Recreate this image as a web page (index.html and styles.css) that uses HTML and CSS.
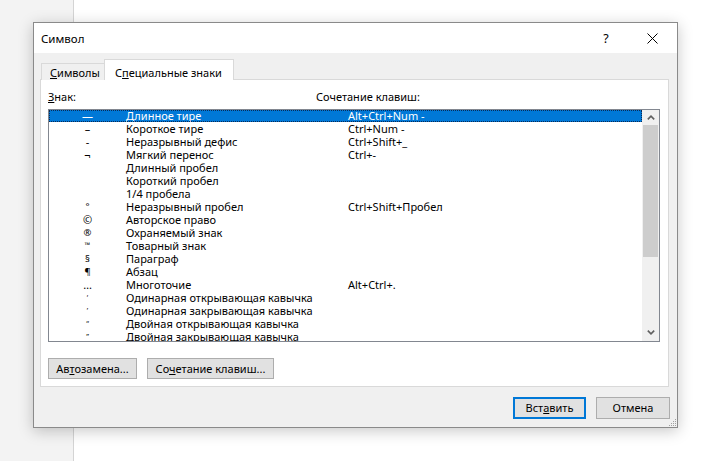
FILE: index.html
```html
<!DOCTYPE html>
<html lang="ru">
<head>
<meta charset="utf-8">
<title>Символ</title>
<link rel="stylesheet" href="styles.css">
</head>
<body>
<div class="desk">
  <div class="side"></div>
  <div class="page"></div>
</div>

<div class="dialog">
  <div class="titlebar">
    <span class="title">Символ</span>
    <span class="help">?</span>
    <span class="close">
      <svg width="11" height="11" viewBox="0 0 11 11"><path d="M0.5 0.5 L10.5 10.5 M10.5 0.5 L0.5 10.5" stroke="#000" stroke-width="1" fill="none"/></svg>
    </span>
  </div>
  <div class="body">
    <div class="tabs">
      <div class="tab tab-sym"><u>С</u>имволы</div>
      <div class="tab active">С<u>п</u>ециальные знаки</div>
    </div>
    <div class="panel">
      <div class="heads">
        <span><u>З</u>нак:</span>
        <span>Сочетание клавиш:</span>
      </div>
      <div class="listbox">
        <div class="rows">
          <div class="row selected"><span class="sym">—</span><span>Длинное тире</span><span>Alt+Ctrl+Num -</span></div>
          <div class="row"><span class="sym">–</span><span>Короткое тире</span><span>Ctrl+Num -</span></div>
          <div class="row"><span class="sym">-</span><span>Неразрывный дефис</span><span>Ctrl+Shift+_</span></div>
          <div class="row"><span class="sym">¬</span><span>Мягкий перенос</span><span>Ctrl+-</span></div>
          <div class="row"><span class="sym"></span><span>Длинный пробел</span><span></span></div>
          <div class="row"><span class="sym"></span><span>Короткий пробел</span><span></span></div>
          <div class="row"><span class="sym"></span><span>1/4 пробела</span><span></span></div>
          <div class="row"><span class="sym small">°</span><span>Неразрывный пробел</span><span>Ctrl+Shift+Пробел</span></div>
          <div class="row"><span class="sym">©</span><span>Авторское право</span><span></span></div>
          <div class="row"><span class="sym small">®</span><span>Охраняемый знак</span><span></span></div>
          <div class="row"><span class="sym tiny">™</span><span>Товарный знак</span><span></span></div>
          <div class="row"><span class="sym small">§</span><span>Параграф</span><span></span></div>
          <div class="row"><span class="sym small">¶</span><span>Абзац</span><span></span></div>
          <div class="row"><span class="sym">…</span><span>Многоточие</span><span>Alt+Ctrl+.</span></div>
          <div class="row"><span class="sym tiny">‘</span><span>Одинарная открывающая кавычка</span><span></span></div>
          <div class="row"><span class="sym tiny">’</span><span>Одинарная закрывающая кавычка</span><span></span></div>
          <div class="row"><span class="sym tiny">“</span><span>Двойная открывающая кавычка</span><span></span></div>
          <div class="row"><span class="sym tiny">”</span><span>Двойная закрывающая кавычка</span><span></span></div>
        </div>
        <div class="scrollbar">
          <div class="sb-btn">
            <svg width="8" height="5" viewBox="0 0 8 5"><path d="M0.8 4.4 L4 1.2 L7.2 4.4" stroke="#606060" stroke-width="1.6" fill="none"/></svg>
          </div>
          <div class="thumb"></div>
          <div class="track"></div>
          <div class="sb-btn">
            <svg width="8" height="5" viewBox="0 0 8 5"><path d="M0.8 0.6 L4 3.8 L7.2 0.6" stroke="#606060" stroke-width="1.6" fill="none"/></svg>
          </div>
        </div>
      </div>
      <div class="panel-buttons">
        <button class="btn w-auto">Ав<u>т</u>озамена...</button>
        <button class="btn w-keys">Со<u>ч</u>етание клавиш...</button>
      </div>
    </div>
    <div class="footer">
      <button class="btn default w-ok">Вст<u>а</u>вить</button>
      <button class="btn w-cancel">Отмена</button>
    </div>
  </div>
  <svg class="grip" width="9" height="9" viewBox="0 0 9 9">
    <rect x="7" y="1" width="1" height="1" fill="#a0a0a0"/>
    <rect x="5" y="3" width="1" height="1" fill="#a0a0a0"/>
    <rect x="7" y="3" width="1" height="1" fill="#a0a0a0"/>
    <rect x="3" y="5" width="1" height="1" fill="#a0a0a0"/>
    <rect x="5" y="5" width="1" height="1" fill="#a0a0a0"/>
    <rect x="7" y="5" width="1" height="1" fill="#a0a0a0"/>
    <rect x="1" y="7" width="1" height="1" fill="#a0a0a0"/>
    <rect x="3" y="7" width="1" height="1" fill="#a0a0a0"/>
    <rect x="5" y="7" width="1" height="1" fill="#a0a0a0"/>
    <rect x="7" y="7" width="1" height="1" fill="#a0a0a0"/>
  </svg>
</div>
</body>
</html>
```

FILE: styles.css
```css
* { box-sizing: border-box; }

html, body {
  margin: 0;
  padding: 0;
  width: 711px;
  height: 461px;
  overflow: hidden;
  font-family: "Noto Sans", "Open Sans", "DejaVu Sans", sans-serif;
  font-size: 11px;
  color: #000;
  background: #fff;
}

.desk {
  display: flex;
  height: 461px;
}
.side {
  width: 74px;
  background: #f3f3f3;
  border-right: 1px solid #d4d4d4;
}
.page {
  flex: 1;
  background: #fff;
}

.dialog {
  position: absolute;
  left: 33px;
  top: 22px;
  width: 645px;
  height: 406px;
  border: 1px solid #8a8a8a;
  background: #f0f0f0;
  box-shadow: 0 3px 14px rgba(0, 0, 0, 0.22);
  display: flex;
  flex-direction: column;
}

.titlebar {
  height: 30px;
  background: #fff;
  display: flex;
  align-items: center;
  padding-left: 7px;
  flex: none;
}
.title {
  flex: 1;
  font-size: 11.5px;
}
.help {
  width: 12px;
  font-size: 12.5px;
  margin-right: 35px;
  text-align: center;
}
.close {
  width: 11px;
  height: 11px;
  margin-right: 19px;
  display: flex;
}

.body {
  flex: 1;
  display: flex;
  flex-direction: column;
  padding: 6px 7px 0 6px;
}

.tabs {
  display: flex;
  align-items: flex-end;
  padding-left: 1px;
  height: 21px;
  position: relative;
  z-index: 1;
  margin-bottom: -1px;
}
.tab {
  height: 17px;
  line-height: 18px;
  padding: 0 0 0 8px;
  border: 1px solid #d9d9d9;
  border-bottom: none;
  background: #f0f0f0;
  white-space: nowrap;
}
.tab-sym {
  width: 64px;
}
.tab.active {
  width: 130px;
  height: 21px;
  line-height: 25px;
  padding: 0 0 0 10px;
  background: #fff;
  margin-left: -1px;
}

.panel {
  border: 1px solid #d9d9d9;
  background: #fff;
  padding: 10px 7px 7px 7px;
  margin-right: 1px;
}

.heads {
  display: grid;
  grid-template-columns: 268px 1fr;
  height: 16px;
  line-height: 14px;
  margin-bottom: 3px;
}

.listbox {
  width: 612px;
  height: 233px;
  border: 1px solid #828790;
  display: flex;
  overflow: hidden;
}
.rows {
  flex: 1;
  overflow: hidden;
}
.row {
  display: grid;
  grid-template-columns: 77px 222px 1fr;
  height: 13px;
  line-height: 12px;
  white-space: nowrap;
}
.row.selected {
  height: 12px;
  margin-bottom: 1px;
  background: #0078d7;
  color: #fff;
  outline: 1px dotted #0a2a55;
  outline-offset: -1px;
}
.sym {
  text-align: center;
}
.sym.small {
  font-size: 9.5px;
}
.sym.tiny {
  font-size: 7.5px;
  line-height: 10px;
}

.scrollbar {
  width: 17px;
  flex: none;
  background: #f0f0f0;
  display: flex;
  flex-direction: column;
}
.sb-btn {
  height: 15px;
  display: flex;
  align-items: center;
  justify-content: center;
}
.sb-btn:last-child {
  height: 17px;
}
.thumb {
  height: 132px;
  margin: 0 1px;
  background: #cdcdcd;
}
.track {
  flex: 1;
}

.panel-buttons {
  display: flex;
  gap: 10px;
  margin-top: 16px;
}

.btn {
  height: 21px;
  padding: 0;
  border: 1px solid #adadad;
  background: #e1e1e1;
  font-family: inherit;
  font-size: 11px;
  color: #000;
  text-align: center;
  line-height: 18px;
}
.btn.default {
  border: 1px solid #0078d7;
  box-shadow: inset 0 0 0 1px #0078d7;
}
.w-auto { width: 89px; }
.w-keys { width: 127px; }
.w-ok { width: 73px; height: 22px; }
.w-cancel { width: 74px; height: 22px; }

.footer {
  display: flex;
  justify-content: flex-end;
  gap: 10px;
  margin-top: 10px;
}

.grip {
  position: absolute;
  right: 0;
  bottom: 0;
}
```
